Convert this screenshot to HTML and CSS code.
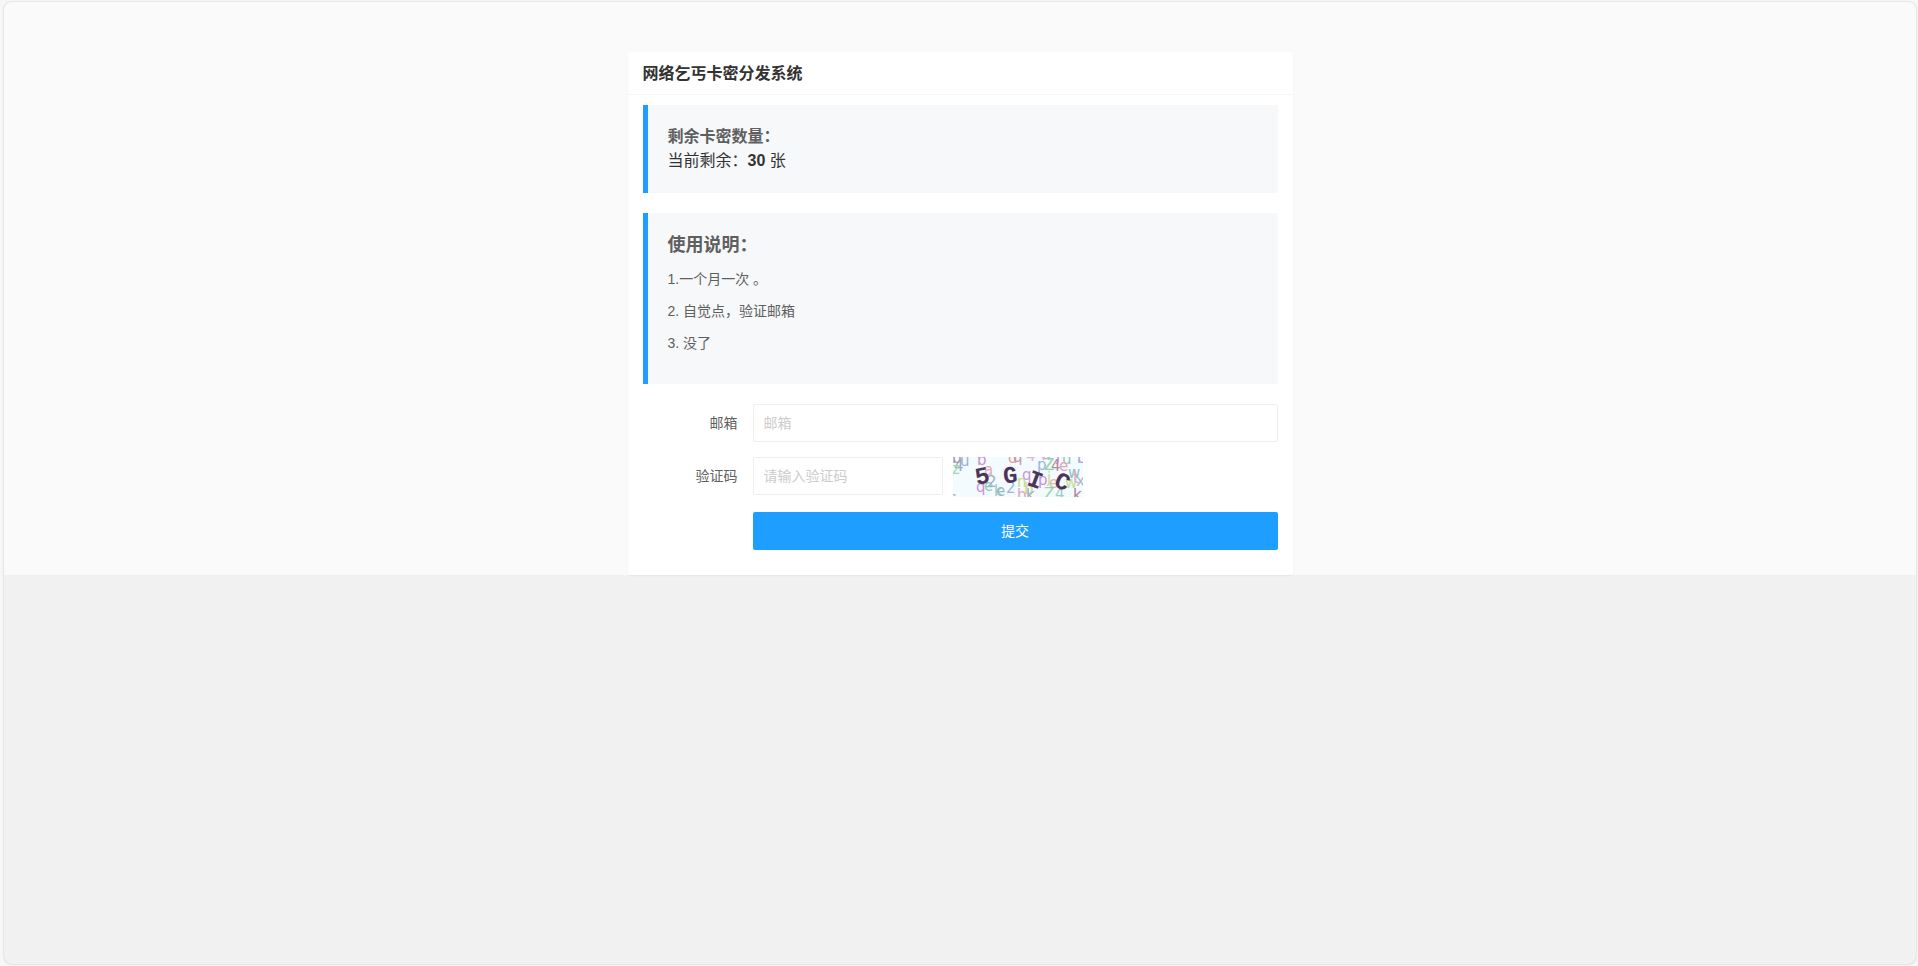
FILE: index.html
```
<!DOCTYPE html>
<html lang="zh-CN">
<head>
	<meta charset="UTF-8">
	<title>网络乞丐卡密分发系统</title>
	<link rel="stylesheet" href="styles.css">
</head>
<body>
	<div class="page">
		<div class="main">
			<div class="card">
				<h1 class="card-header">网络乞丐卡密分发系统</h1>
				<div class="card-body">
					<div class="quote">
						<h2 class="count-title">剩余卡密数量：</h2>
						<div class="count">当前剩余：<b>30</b> 张</div>
					</div>
					<div class="quote">
						<h2 class="help-title">使用说明：</h2>
						<p>1.一个月一次 。</p>
						<p>2. 自觉点，验证邮箱</p>
						<p>3. 没了</p>
					</div>
					<form class="form">
						<div class="form-item">
							<label class="label" for="email">邮箱</label>
							<input class="input" type="text" id="email" placeholder="邮箱">
						</div>
						<div class="form-item">
							<label class="label" for="code">验证码</label>
							<input class="input input-code" type="text" id="code" placeholder="请输入验证码">
							<!-- 验证码 -->
							<svg class="captcha" width="130" height="40" viewBox="0 0 130 40" role="img" aria-label="验证码">
								<rect width="130" height="40" fill="#f3fbff"/>
								<g class="noise">
									<text x="-1" y="6" fill="#a8909f">b</text>
									<text x="1" y="14" fill="#9aa8c8">4</text>
									<text x="7" y="9" fill="#a3adcb">u</text>
									<text x="-1" y="17" fill="#9bdcae">z</text>
									<text x="24" y="8" fill="#c98fd8">b</text>
									<text x="31" y="18" fill="#e3a9b8">a</text>
									<text x="55" y="6" fill="#d99aa8">d</text>
									<text x="60" y="5" fill="#c497a4">q</text>
									<text x="73" y="4" fill="#dfb9d2">4</text>
									<text x="87" y="3" fill="#cfb4de">w</text>
									<text x="103" y="4" fill="#c58be0">j</text>
									<text x="109" y="7" fill="#9dbdb6">u</text>
									<text x="124" y="6" fill="#a6a4cc">b</text>
									<text x="84" y="13" fill="#9db4dc">p</text>
									<text x="91" y="13" fill="#93d1a6">Z</text>
									<text x="98" y="14" fill="#b08c9c">4</text>
									<text x="106" y="14" fill="#e5a3bd">e</text>
									<text x="69" y="23" fill="#cb96dc">q</text>
									<text x="85" y="28" fill="#c98fe0">p</text>
									<text x="94" y="26" fill="#cbdc8a">j</text>
									<text x="96" y="31" fill="#dfb9ae">e</text>
									<text x="115" y="21" fill="#92bfc0">w</text>
									<text x="112" y="31" fill="#c9dd92">w</text>
									<text x="120" y="26" fill="#dda8c5">t</text>
									<text x="123" y="29" fill="#a3bfc2">x</text>
									<text x="23" y="35" fill="#cf8ddc">q</text>
									<text x="31" y="34" fill="#8fd3ad">e</text>
									<text x="34" y="30" fill="#a0b0c0">2</text>
									<text x="41" y="39" fill="#9bc5bd">k</text>
									<text x="43" y="39" fill="#9db9bd">e</text>
									<text x="53" y="36" fill="#a6b2d5">2</text>
									<text x="64" y="30" fill="#c7da87">n</text>
									<text x="71" y="37" fill="#cbd893">b</text>
									<text x="64" y="43" fill="#dda7bd">b</text>
									<text x="73" y="43" fill="#9badc5">k</text>
									<text x="91" y="42" fill="#93d6a6">Z</text>
									<text x="102" y="42" fill="#9bd0c4">4</text>
									<text x="120" y="43" fill="#a88296">k</text>
									<text x="-4" y="46" fill="#8fb5ba">s</text>
								</g>
								<g class="code">
									<text x="22" y="27" transform="rotate(-12 28 19)">5</text>
									<text x="50" y="26" transform="rotate(-5 56 19)">G</text>
									<text x="75" y="30" transform="rotate(20 81 23)">I</text>
									<text x="102" y="32" transform="rotate(25 109 25)">C</text>
								</g>
							</svg>
						</div>
						<div class="form-item">
							<button class="btn" type="button">提交</button>
						</div>
					</form>
				</div>
			</div>
		</div>
	</div>
</body>
</html>
```
FILE: styles.css
```
*{padding: 0;margin: 0;box-sizing: border-box;}
body{min-height: 100vh;display: flex;padding: 2px 2px 2px 4px;background: #f7f7f7;color: #333;font: 14px/22px "Liberation Sans", "Noto Sans CJK SC", sans-serif;}

.page{flex: 1;background: #f1f1f1;border-radius: 8px;overflow: hidden;box-shadow: 0 0 2px rgba(0,0,0,.25);}
.main{padding: 50px 15px 0;background: #fafafa;}

.card{max-width: 665px;margin: 0 auto;background: #fff;border-radius: 2px;box-shadow: 0 1px 2px rgba(0,0,0,.05);}
.card-header{height: 43px;padding: 0 15px;line-height: 44px;font-size: 16px;border-bottom: 1px solid #f6f6f6;}
.card-body{padding: 10px 15px;}

.quote{margin-bottom: 20px;padding: 20px;border-left: 5px solid #1e9fff;border-radius: 0 2px 2px 0;background: #f6f8fa;color: #5f5f5f;}
.quote p{margin-bottom: 10px;}
.count-title{font-size: 16px;line-height: 24px;}
.count{font-size: 16px;line-height: 24px;color: #333;}
.help-title{margin-bottom: 10px;font-size: 18px;line-height: 25px;}

.form-item{display: flex;margin-bottom: 15px;}
.label{flex: none;width: 110px;padding: 8px 15px;text-align: right;color: #5f5f5f;}
.input{flex: 1;min-width: 0;height: 38px;padding: 0 10px;border: 1px solid #eee;border-radius: 2px;background: #fff;font: inherit;}
.input::placeholder{color: #ccc;}
.input-code{flex: none;width: 190px;margin-right: 10px;}
.captcha{flex: none;display: block;}
.noise{font: 15px "DejaVu Sans", sans-serif;}
.code{font: bold 24px "Liberation Mono", monospace;fill: #4c3558;}

.btn{flex: 1;height: 38px;margin-left: 110px;border: none;border-radius: 2px;background: #1e9fff;color: #fff;font: inherit;cursor: pointer;}
```
